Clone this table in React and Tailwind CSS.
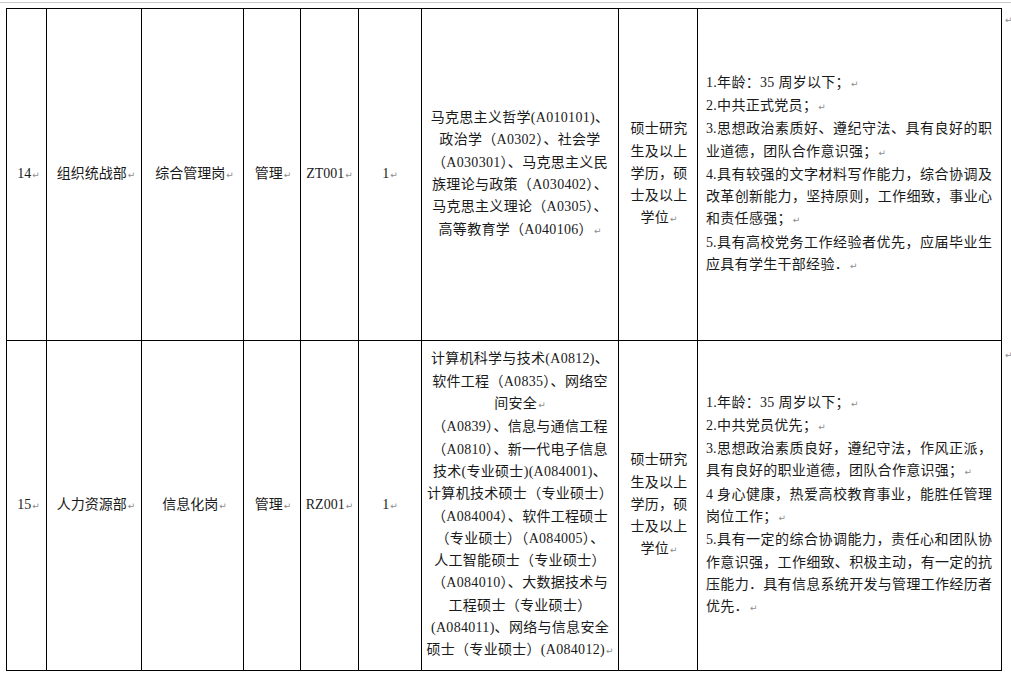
import React from 'react';

const rows = [
    {
        no: '14',
        dept: '组织统战部',
        post: '综合管理岗',
        kind: '管理',
        code: 'ZT001',
        num: '1',
        majors: [
            '马克思主义哲学(A010101)、',
            '政治学（A0302）、社会学',
            '（A030301）、马克思主义民',
            '族理论与政策（A030402）、',
            '马克思主义理论（A0305）、',
            '高等教育学（A040106）|',
        ],
        degree: ['硕士研究', '生及以上', '学历，硕', '士及以上', '学位|'],
        reqs: [
            '1.年龄：35 周岁以下；|',
            '2.中共正式党员；|',
            '3.思想政治素质好、遵纪守法、具有良好的职',
            '业道德，团队合作意识强；|',
            '4.具有较强的文字材料写作能力，综合协调及',
            '改革创新能力，坚持原则，工作细致，事业心',
            '和责任感强；|',
            '5.具有高校党务工作经验者优先，应届毕业生',
            '应具有学生干部经验．|',
        ],
    },
    {
        no: '15',
        dept: '人力资源部',
        post: '信息化岗',
        kind: '管理',
        code: 'RZ001',
        num: '1',
        majors: [
            '计算机科学与技术(A0812)、',
            '软件工程（A0835）、网络空',
            '间安全|',
            '（A0839）、信息与通信工程',
            '（A0810）、新一代电子信息',
            '技术(专业硕士)(A084001)、',
            '计算机技术硕士（专业硕士）',
            '（A084004）、软件工程硕士',
            '（专业硕士）（A084005）、',
            '人工智能硕士（专业硕士）',
            '（A084010）、大数据技术与',
            '工程硕士（专业硕士）',
            '(A084011)、网络与信息安全',
            '硕士（专业硕士）(A084012)|',
        ],
        degree: ['硕士研究', '生及以上', '学历，硕', '士及以上', '学位|'],
        reqs: [
            '1.年龄：35 周岁以下；|',
            '2.中共党员优先；|',
            '3.思想政治素质良好，遵纪守法，作风正派，',
            '具有良好的职业道德，团队合作意识强；|',
            '4 身心健康，热爱高校教育事业，能胜任管理',
            '岗位工作；|',
            '5.具有一定的综合协调能力，责任心和团队协',
            '作意识强，工作细致、积极主动，有一定的抗',
            '压能力．具有信息系统开发与管理工作经历者',
            '优先．|',
        ],
    },
];

// paragraph mark, like the one Word shows
const Mark = () => (
    <span className="ml-[1px] text-[9px] text-[#8c8c8c] tracking-normal font-['DejaVu_Sans',sans-serif]">↵</span>
);

// "|" at the end of a line means the paragraph ends there
const Line = ({ text, className }) => {
    const end = text.endsWith('|');
    return (
        <div className={className}>
            {end ? text.slice(0, -1) : text}
            {end && <Mark />}
        </div>
    );
};

const Cell = ({ children }) => (
    <div className="flex items-center justify-center border-r border-b border-black">
        {children}
    </div>
);

export default function App() {
    return (
        <div className="w-[1011px] h-[676px] bg-white pt-[2px] text-[14px] leading-[22.3px] text-[#1a1a1a] font-['Liberation_Serif','Noto_Sans_CJK_SC',serif]">
            <div className="h-px bg-[#c8c8c8]" />
            <div className="flex mt-[5px] ml-[6px]">
                <div className="grid grid-cols-[40px_95px_102px_57px_58px_63px_197px_79px_304px] grid-rows-[332px_330px] border-l border-t border-black">
                    {rows.map((r) => (
                        <React.Fragment key={r.no}>
                            <Cell><Line text={r.no + '|'} className="pl-[4px]" /></Cell>
                            <Cell><Line text={r.dept + '|'} className="pl-[4px]" /></Cell>
                            <Cell><Line text={r.post + '|'} className="pl-[4px]" /></Cell>
                            <Cell><Line text={r.kind + '|'} className="pl-[2px]" /></Cell>
                            <Cell><Line text={r.code + '|'} /></Cell>
                            <Cell><Line text={r.num + '|'} /></Cell>
                            <Cell>
                                <div className="flex flex-col items-center">
                                    {r.majors.map((m, i) => (
                                        <Line key={i} text={m} className="whitespace-nowrap text-center tracking-[0.3px]" />
                                    ))}
                                </div>
                            </Cell>
                            <Cell>
                                <div className="flex flex-col items-center pl-[2px]">
                                    {r.degree.map((d, i) => (
                                        <Line key={i} text={d} className="whitespace-nowrap text-center tracking-[0.2px]" />
                                    ))}
                                </div>
                            </Cell>
                            <Cell>
                                <div className="w-full pl-[8px] pr-[9px]">
                                    {r.reqs.map((q, i) => (
                                        <Line
                                            key={i}
                                            text={q}
                                            className={q.endsWith('|') ? 'whitespace-nowrap text-left tracking-[0.3px]' : 'whitespace-nowrap text-justify [text-align-last:justify]'}
                                        />
                                    ))}
                                </div>
                            </Cell>
                        </React.Fragment>
                    ))}
                </div>
                <div className="flex flex-col pl-[2px]">
                    <div className="h-[333px] pt-[4px] leading-[14px]"><Mark /></div>
                    <div className="h-[330px] pt-[6px] leading-[14px]"><Mark /></div>
                </div>
            </div>
        </div>
    );
}
